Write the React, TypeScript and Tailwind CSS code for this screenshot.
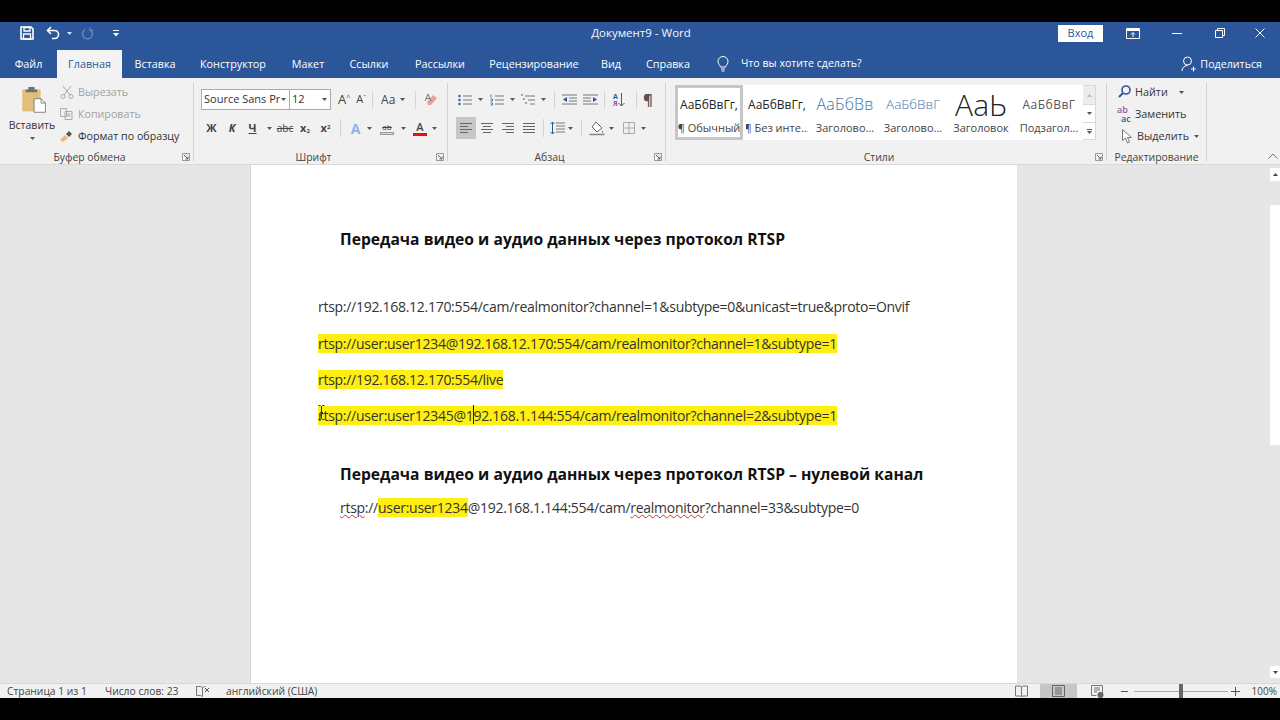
import React from "react";

const Caret = ({ c = "#555" }: { c?: string }) => (
  <svg width="5" height="3" viewBox="0 0 5 3" className="shrink-0"><path d="M0 0h5L2.5 3z" fill={c} /></svg>
);

const Launcher = () => (
  <svg width="8" height="8" viewBox="0 0 8 8" className="shrink-0"><path d="M.5 7.5v-7h7v7z" fill="none" stroke="#999" /><path d="M2 2l4 4M6 3.5V6H3.5" fill="none" stroke="#666" /></svg>
);

const Sep = ({ h = "h-[18px]" }: { h?: string }) => <div className={`w-px ${h} bg-[#d4d4d4] shrink-0`} />;

const Lines = ({ rows, w = 12 }: { rows: [number, number, number][]; w?: number }) => (
  <svg width={w} height="12" viewBox={`0 0 ${w} 12`} className="shrink-0">
    {rows.map(([x, y, l], i) => <rect key={i} x={x} y={y} width={l} height="1" fill="#666" />)}
  </svg>
);

const Group = ({ w, label, launcher, children }: { w: string; label: string; launcher?: boolean; children: React.ReactNode }) => (
  <div className={`${w} shrink-0 flex flex-col border-r border-[#d2d2d2] mt-[5px] h-[78px]`}>
    <div className="flex-1 min-h-0 -mt-[3px]">{children}</div>
    <div className="h-[8px] flex items-center">
      <div className={`flex-1 text-center text-[10.4px] leading-[8px] text-[#444] whitespace-nowrap ${launcher ? "pr-[3px]" : ""}`}>{label}</div>
      {launcher && <div className="pr-[3px] flex"><Launcher /></div>}
    </div>
  </div>
);

const Style = ({ w, sample, label, cls, active }: { w: string; sample: string; label: string; cls: string; active?: boolean }) => (
  <div className={`${w} shrink-0 h-full flex flex-col items-center overflow-hidden ${active ? "border-[3px] border-[#c6c6c6]" : "border-[3px] border-transparent"}`}>
    <div className={`h-[33px] leading-[33px] flex items-center whitespace-nowrap ${cls}`}>{sample}</div>
    <div className="text-[11px] leading-[13px] text-[#444] whitespace-nowrap">{label}</div>
  </div>
);

const Tab = ({ t, active, w }: { t: string; active?: boolean; w: string }) => (
  <div className={`${w} shrink-0 h-[28px] flex items-center justify-center text-[10.8px] ${active ? "bg-[#f3f3f3] text-[#2b579a]" : "text-white"}`}>{t}</div>
);

const DocLine = ({ children, cls }: { children: React.ReactNode; cls: string }) => (
  <div className={`text-[14px] leading-[20px] text-[#333] whitespace-nowrap tracking-[-0.28px] ${cls}`}>{children}</div>
);

const Mark = ({ children }: { children: React.ReactNode }) => <span className="bg-[#ffee11]">{children}</span>;

export default function App() {
  return (
    <div className="w-[1280px] h-[720px] bg-black flex flex-col overflow-hidden font-['Open_Sans','Noto_Sans',sans-serif]">
      <div className="h-[22px] shrink-0" />
      {/* Title bar */}
      <div className="h-[28px] shrink-0 bg-[#2b579a] flex items-center text-white pb-[6px]">
        <div className="flex items-center pl-[20px] w-[140px] gap-[5px]">
          <svg width="14" height="14" viewBox="0 0 14 14" className="shrink-0"><path d="M1 1h10l2 2v10H1z" fill="none" stroke="#fff" strokeWidth="1.6" /><path d="M4 1.5h6V5H4zM3.5 8h7v5h-7z" fill="none" stroke="#fff" strokeWidth="1.3" /></svg>
          <svg width="16" height="14" viewBox="0 0 16 14" className="ml-[7px] shrink-0"><path d="M5 1L1.5 4.5 5 8" fill="none" stroke="#fff" strokeWidth="1.6" /><path d="M2 4.5h6.5a4 4 0 0 1 0 8H6" fill="none" stroke="#fff" strokeWidth="1.6" /></svg>
          <Caret c="#dce6f5" />
          <svg width="13" height="13" viewBox="0 0 13 13" className="ml-[4px] shrink-0"><path d="M9 2.5a5 5 0 1 1-5 0M9 .5v3h3" fill="none" stroke="#6b8cc0" strokeWidth="1.3" /></svg>
          <svg width="6" height="7" viewBox="0 0 6 7" className="ml-[14px] shrink-0"><path d="M0 0h6v1H0zM0 3h6L3 6.500z" fill="#fff" /></svg>
        </div>
        <div className="flex-1 text-center text-[11.5px] pl-[84px] text-[#f4f7fc]">Документ9  -  Word</div>
        <div className="w-[45px] h-[17px] bg-white text-[#2b579a] text-[11px] flex items-center justify-center shrink-0">Вход</div>
        <div className="w-[45px] flex justify-center ml-[7px]">
          <svg width="14" height="11" viewBox="0 0 14 11"><path d="M.5.500h13v10H.500z" fill="none" stroke="#fff" /><path d="M1 1h12v2H1z" fill="#fff" /><path d="M7 9V5M5 6.500L7 4.500l2 2" fill="none" stroke="#fff" /></svg>
        </div>
        <div className="w-[43px] flex justify-center"><div className="w-[10px] h-px bg-white" /></div>
        <div className="w-[44px] flex justify-center">
          <svg width="10" height="10" viewBox="0 0 10 10"><path d="M.5 2.500h7v7h-7zM2.500 2.500v-2h7v7h-2" fill="none" stroke="#fff" /></svg>
        </div>
        <div className="w-[38px] flex justify-center pr-[2px]">
          <svg width="10" height="10" viewBox="0 0 10 10"><path d="M.5.500l9 9M9.500.500l-9 9" fill="none" stroke="#fff" /></svg>
        </div>
      </div>
      {/* Tabs */}
      <div className="h-[28px] shrink-0 bg-[#2b579a] flex items-center">
        <Tab t="Файл" w="w-[57px]" />
        <Tab t="Главная" active w="w-[65px]" />
        <Tab t="Вставка" w="w-[66px]" />
        <Tab t="Конструктор" w="w-[90px]" />
        <Tab t="Макет" w="w-[60px]" />
        <Tab t="Ссылки" w="w-[62px]" />
        <Tab t="Рассылки" w="w-[80px]" />
        <Tab t="Рецензирование" w="w-[108px]" />
        <Tab t="Вид" w="w-[46px]" />
        <Tab t="Справка" w="w-[68px]" />
        <div className="flex items-center gap-[12px] ml-[15px] text-white text-[10.6px]">
          <svg width="12" height="16" viewBox="0 0 12 16"><path d="M3.500 11C3 9 1 8 1 5.500a5 5 0 0 1 10 0C11 8 9 9 8.500 11zM4 13h4M4.500 15h3" fill="none" stroke="#fff" /></svg>
          <span>Что вы хотите сделать?</span>
        </div>
        <div className="flex-1" />
        <div className="flex items-center gap-[4px] text-white text-[10.7px] pr-[18px]">
          <svg width="15" height="16" viewBox="0 0 15 16"><circle cx="6.500" cy="5" r="4" fill="none" stroke="#fff" /><path d="M1 15c0-3 2-5.500 5.500-5.500M10 13h5M12.500 10.500v5" fill="none" stroke="#fff" /></svg>
          <span>Поделиться</span>
        </div>
      </div>
      {/* Ribbon */}
      <div className="h-[87px] shrink-0 bg-[#f1f1f1] border-b border-[#d9d9d9] flex text-[#444]">
        <Group w="w-[194px]" label="Буфер обмена" launcher>
          <div className="flex h-full">
            <div className="w-[60px] flex flex-col items-center pt-[6px] pl-[4px] shrink-0">
              <svg width="27" height="28" viewBox="0 0 30 32" className="ml-[4px]">
                <path d="M1 4h21v25H1z" fill="#e3bd7c" />
                <path d="M8 1h7v3h3v3H5V4h3z" fill="#6f6f6f" />
                <path d="M14.500 14.500h8l5 5V30h-13z" fill="#fff" stroke="#777" />
                <path d="M22.500 14.500v5h5" fill="none" stroke="#777" />
              </svg>
              <div className="text-[10.5px] leading-[14px] mt-[4px] text-[#333]">Вставить</div>
              <div className="mt-[5px]"><Caret /></div>
            </div>
            <div className="flex flex-col pt-[1px] text-[10.7px] text-[#a2a2a2] whitespace-nowrap">
              <div className="h-[22px] flex items-center gap-[4px]">
                <svg width="14" height="14" viewBox="0 0 14 14"><path d="M3 1l7 9M11 1L4 10" stroke="#a8a8a8" fill="none" /><circle cx="3" cy="11.500" r="2" fill="none" stroke="#a8a8a8" /><circle cx="11" cy="11.500" r="2" fill="none" stroke="#a8a8a8" /></svg>
                <span>Вырезать</span>
              </div>
              <div className="h-[22px] flex items-center gap-[4px]">
                <svg width="14" height="14" viewBox="0 0 14 14"><path d="M.5 1.500h6v8h-6zM5 4.500h7v8H5z" fill="#f1f1f1" stroke="#aaa" /><path d="M6.500 7h4M6.500 9h4" stroke="#aaa" /></svg>
                <span>Копировать</span>
              </div>
              <div className="h-[22px] flex items-center gap-[4px] text-[#333]">
                <svg width="14" height="14" viewBox="0 0 14 14"><path d="M0 11l5-5 3 3-5 4z" fill="#e3bd7c" /><path d="M6 5l3-3 3 3-3 3z" fill="#555" /></svg>
                <span>Формат по образцу</span>
              </div>
            </div>
          </div>
        </Group>
        <Group w="w-[254px]" label="Шрифт" launcher>
          <div className="pt-[9px] pl-[7px] flex flex-col">
            <div className="flex items-center h-[21px]">
              <div className="w-[89px] h-[21px] bg-white border border-[#ababab] flex items-center justify-between pl-[2px] pr-[3px] text-[11px] text-[#333] whitespace-nowrap">
                <span>Source Sans Pr</span><Caret />
              </div>
              <div className="w-[41px] h-[21px] bg-white border border-l-0 border-[#ababab] flex items-center justify-between pl-[2px] pr-[3px] text-[11px] text-[#333]">
                <span>12</span><Caret />
              </div>
              <div className="flex items-center gap-[9px] ml-[7px] text-[13px] text-[#444]">
                <span>A<sup className="text-[7px] text-[#2b579a]">^</sup></span>
                <span className="text-[11px] -ml-[3px]">A<sup className="text-[7px] text-[#2b579a]">ˇ</sup></span>
              </div>
              <div className="ml-[6px]"><Sep /></div>
              <div className="flex items-center gap-[5px] ml-[8px] text-[12px]">Aa <Caret /></div>
              <div className="ml-[10px]"><Sep /></div>
              <svg width="15" height="15" viewBox="0 0 15 15" className="ml-[8px]"><path d="M3 10l6-7 4 3-6 7H4z" fill="#e9a0a0" /><path d="M1 9l3-7 3 7M2 6.500h4" fill="none" stroke="#777" /></svg>
            </div>
            <div className="flex items-center h-[22px] mt-[7px] text-[#444]">
              <span className="text-[11px] font-bold w-[21px] text-center">Ж</span>
              <span className="text-[11px] font-bold italic w-[20px] text-center">К</span>
              <span className="text-[11px] font-bold underline w-[21px] text-center">Ч</span>
              <div className="w-[12px] flex justify-center"><Caret /></div>
              <span className="text-[10px] line-through w-[20px] text-center">abc</span>
              <span className="text-[11px] font-bold w-[20px] text-center">x<sub className="text-[6px]">2</sub></span>
              <span className="text-[11px] font-bold w-[21px] text-center">x<sup className="text-[6px]">2</sup></span>
              <div className="ml-[4px]"><Sep /></div>
              <span className="text-[14px] font-bold text-[#8fb4e8] w-[19px] text-center ml-[5px]">A</span>
              <div className="w-[8px] flex justify-center"><Caret /></div>
              <div className="w-[18px] ml-[5px] flex flex-col items-center">
                <span className="text-[8px] leading-[9px] line-through">ab</span>
                <div className="w-[14px] h-[3px] bg-[#ffee11] border border-[#999] mt-[1px]" />
              </div>
              <div className="w-[14px] flex justify-center"><Caret /></div>
              <div className="w-[16px] ml-[2px] flex flex-col items-center">
                <span className="text-[11px] leading-[11px] font-semibold">A</span>
                <div className="w-[14px] h-[3px] bg-[#e81010] mt-[1px]" />
              </div>
              <div className="w-[12px] flex justify-center"><Caret /></div>
            </div>
          </div>
        </Group>
        <Group w="w-[218px]" label="Абзац" launcher>
          <div className="pt-[9px] pl-[10px] flex flex-col">
            <div className="flex items-center h-[21px]">
              <svg width="14" height="12" viewBox="0 0 14 12" className="shrink-0"><circle cx="1.500" cy="2" r="1.200" fill="#2b579a" /><circle cx="1.500" cy="6" r="1.200" fill="#2b579a" /><circle cx="1.500" cy="10" r="1.200" fill="#2b579a" /><path d="M5 2h9M5 6h9M5 10h9" stroke="#777" /></svg>
              <div className="ml-[6px]"><Caret /></div>
              <svg width="14" height="12" viewBox="0 0 14 12" className="ml-[7px] shrink-0"><path d="M1 .500v3M.500 5h2v2H.500M.500 9h2v2H.500" stroke="#2b579a" fill="none" strokeWidth=".8" /><path d="M5 2h9M5 6h9M5 10h9" stroke="#777" /></svg>
              <div className="ml-[6px]"><Caret /></div>
              <svg width="15" height="12" viewBox="0 0 15 12" className="ml-[6px] shrink-0"><path d="M0 1h2M2 5h2M4 9h2" stroke="#2b579a" fill="none" /><path d="M4 2h10M7 6h7M9 10h5" stroke="#777" /></svg>
              <div className="ml-[5px]"><Caret /></div>
              <div className="ml-[8px]"><Sep /></div>
              <svg width="15" height="12" viewBox="0 0 15 12" className="ml-[7px] shrink-0"><path d="M0 1h15M7 4h8M7 7h8M0 10h15" stroke="#777" /><path d="M1 5.500L5 3v5z" fill="#2b579a" /></svg>
              <svg width="15" height="12" viewBox="0 0 15 12" className="ml-[6px] shrink-0"><path d="M0 1h15M0 4h8M0 7h8M0 10h15" stroke="#777" /><path d="M14 5.500L10 3v5z" fill="#2b579a" /></svg>
              <div className="ml-[6px]"><Sep /></div>
              <div className="ml-[8px] w-[14px] flex items-center">
                <div className="flex flex-col text-[7px] leading-[7px] font-bold"><span className="text-[#2b579a]">А</span><span className="text-[#a24bb0]">Я</span></div>
                <svg width="7" height="14" viewBox="0 0 7 14"><path d="M3.500 0v13M.500 10l3 3 3-3" stroke="#555" fill="none" /></svg>
              </div>
              <div className="ml-[9px]"><Sep /></div>
              <span className="ml-[6px] text-[15px] font-bold text-[#555]">¶</span>
            </div>
            <div className="flex items-center h-[22px] mt-[7px] -ml-[2px]">
              <div className="w-[20px] h-[22px] bg-[#c6c6c6] flex items-center justify-center"><Lines rows={[[0, 1, 12], [0, 4, 8], [0, 7, 12], [0, 10, 8]]} /></div>
              <div className="w-[21px] flex justify-center"><Lines rows={[[0, 1, 12], [2, 4, 8], [0, 7, 12], [2, 10, 8]]} /></div>
              <div className="w-[21px] flex justify-center"><Lines rows={[[0, 1, 12], [4, 4, 8], [0, 7, 12], [4, 10, 8]]} /></div>
              <div className="w-[21px] flex justify-center"><Lines rows={[[0, 1, 12], [0, 4, 12], [0, 7, 12], [0, 10, 12]]} /></div>
              <div className="ml-[4px]"><Sep /></div>
              <svg width="15" height="14" viewBox="0 0 15 14" className="ml-[6px] shrink-0"><path d="M6 2h9M6 5h9M6 8h9M6 11h9" stroke="#777" /><path d="M2.500 1v12M.500 3l2-2 2 2M.500 11l2 2 2-2" stroke="#2b579a" fill="none" /></svg>
              <div className="ml-[3px]"><Caret /></div>
              <div className="ml-[8px]"><Sep /></div>
              <svg width="17" height="15" viewBox="0 0 17 15" className="ml-[7px] shrink-0"><path d="M7 1l6 6-5 4-5-5z" fill="#fff" stroke="#666" /><path d="M13 9l1.500 2.500L13 12z" fill="#5a8fd8" /><path d="M.500 13.500h15" stroke="#888" strokeWidth="1.500" /></svg>
              <div className="ml-[3px]"><Caret /></div>
              <svg width="12" height="12" viewBox="0 0 12 12" className="ml-[9px] shrink-0"><path d="M.500.500h11v11H.500zM6 .500v11M.500 6h11" fill="none" stroke="#aaa" /></svg>
              <div className="ml-[6px]"><Caret /></div>
            </div>
          </div>
        </Group>
        <Group w="w-[441px]" label="Стили" launcher>
          <div className="pt-[5px] pl-[9px] flex">
            <div className="h-[55px] w-[408px] bg-white flex overflow-hidden">
              <Style active w="w-[68px]" sample="АаБбВвГг," label="¶ Обычный" cls="text-[12px] text-[#222]" />
              <Style w="w-[68px]" sample="АаБбВвГг," label="¶ Без инте..." cls="text-[12px] text-[#222]" />
              <Style w="w-[68px]" sample="АаБбВв" label="Заголово..." cls="text-[16px] font-light text-[#3f74ad] tracking-[0.2px]" />
              <Style w="w-[68px]" sample="АаБбВвГ" label="Заголово..." cls="text-[13.5px] font-light text-[#3f74ad]" />
              <Style w="w-[68px]" sample="АаЬ" label="Заголовок" cls="text-[30px] text-[#222] font-light" />
              <Style w="w-[68px]" sample="АаБбВвГ" label="Подзагол..." cls="text-[12px] text-[#555] tracking-[0.5px]" />
            </div>
            <div className="w-[13px] h-[55px] flex flex-col border border-[#d8d8d8] border-l-0 shrink-0">
              <div className="h-[19px] bg-[#ececec] flex justify-center items-center border-b border-[#d8d8d8]"><div className="rotate-180"><Caret c="#bbb" /></div></div>
              <div className="h-[18px] bg-white flex justify-center items-center border-b border-[#d8d8d8]"><Caret /></div>
              <div className="flex-1 bg-white flex flex-col justify-center items-center gap-[1px]"><div className="w-[5px] h-px bg-[#555]" /><Caret /></div>
            </div>
          </div>
        </Group>
        <Group w="w-[100px]" label="Редактирование">
          <div className="pl-[11px] pt-[1px] flex flex-col text-[10.8px] text-[#333] whitespace-nowrap">
            <div className="h-[22px] flex items-center gap-[4px]">
              <svg width="13" height="14" viewBox="0 0 13 14" className="shrink-0"><circle cx="8" cy="5" r="4" fill="none" stroke="#2b579a" strokeWidth="1.600" /><path d="M5 8l-4 4" stroke="#2b579a" strokeWidth="2" /></svg>
              <span>Найти</span>
              <div className="ml-[7px]"><Caret /></div>
            </div>
            <div className="h-[22px] flex items-center gap-[1px] -ml-[1px]">
              <div className="flex flex-col text-[9px] leading-[9px] font-semibold w-[17px]"><span className="text-[#9257a8]">ab</span><span className="text-[#2b579a] pl-[4px]">ac</span></div>
              <span>Заменить</span>
            </div>
            <div className="h-[22px] flex items-center gap-[5px] pl-[4px]">
              <svg width="10" height="15" viewBox="0 0 10 15" className="shrink-0"><path d="M.500.500v11l3-2.500 2 5 2-1-2-4.500h4z" fill="#fff" stroke="#777" /></svg>
              <span>Выделить</span>
              <Caret />
            </div>
          </div>
        </Group>
        <div className="flex-1 flex items-end justify-end pb-[5px] pr-[2px]">
          <svg width="10" height="6" viewBox="0 0 10 6"><path d="M.500 5.500L5 1l4.500 4.500" fill="none" stroke="#777" /></svg>
        </div>
      </div>
      {/* Document area */}
      <div className="flex-1 min-h-0 bg-[#e6e6e6] flex justify-start">
        <div className="w-[250px] shrink-0" />
        <div className="w-[767px] shrink-0 bg-white flex flex-col border-l border-[#d4d4d4]">
          <div className="pl-[89px] pt-[63px]">
            <div className="text-[15.65px] leading-[22px] font-bold text-[#111] whitespace-nowrap">Передача видео и аудио данных через протокол RTSP</div>
          </div>
          <div className="pl-[67px] pt-[47px] flex flex-col gap-[16px]">
            <DocLine cls="">rtsp://192.168.12.170:554/cam/realmonitor?channel=1&amp;subtype=0&amp;unicast=true&amp;proto=Onvif</DocLine>
            <DocLine cls="mt-[1px]"><Mark>rtsp://user:user1234@192.168.12.170:554/cam/realmonitor?channel=1&amp;subtype=1</Mark></DocLine>
            <DocLine cls=""><Mark>rtsp://192.168.12.170:554/live</Mark></DocLine>
            <DocLine cls="relative">
              <Mark>rtsp://user:user12345@1</Mark>
              <span className="relative"><span className="absolute left-0 -top-[1px] w-px h-[19px] bg-[#222] z-10" /></span>
              <Mark>92.168.1.144:554/cam/realmonitor?channel=2&amp;subtype=1</Mark>
              <svg width="7" height="15" viewBox="0 0 7 15" className="absolute left-0 -top-[1px]"><path d="M.5.500h2l1 1 1-1h2M3.500 1.500v12M.5 14.500h2l1-1 1 1h2M2 7.500h3" fill="none" stroke="#333" /></svg>
            </DocLine>
          </div>
          <div className="pl-[89px] pt-[37px]">
            <div className="text-[15.65px] leading-[22px] font-bold text-[#111] whitespace-nowrap">Передача видео и аудио данных через протокол RTSP – нулевой канал</div>
          </div>
          <div className="pl-[89px] pt-[13px]">
            <DocLine cls="">
              <span className="underline decoration-wavy decoration-[#d03030] decoration-1">rtsp</span>://<Mark>user:user1234</Mark>@192.168.1.144:554/cam/<span className="underline decoration-wavy decoration-[#d03030] decoration-1">realmonitor</span>?channel=33&amp;subtype=0
            </DocLine>
          </div>
        </div>
        <div className="flex-1" />
        <div className="w-[10px] shrink-0 bg-[#e6e6e6] flex flex-col pt-[3px] pb-[5px]">
          <div className="h-[13px] bg-white flex items-center justify-center"><div className="rotate-180"><Caret c="#444" /></div></div>
          <div className="h-[24px]" />
          <div className="h-[240px] bg-white" />
          <div className="flex-1" />
          <div className="h-[12px] bg-white flex items-center justify-center"><Caret c="#444" /></div>
        </div>
      </div>
      {/* Status bar */}
      <div className="h-[15px] shrink-0 bg-[#f1f1f1] border-t border-[#d8d8d8] flex items-center text-[10.3px] leading-[14px] text-[#444] whitespace-nowrap">
        <span className="ml-[7px] w-[98px]">Страница 1 из 1</span>
        <span className="w-[91px]">Число слов: 23</span>
        <svg width="14" height="13" viewBox="0 0 14 13" className="shrink-0"><path d="M.500 1.500h4l2 1v9l-2-1h-4zM6.500 2.500l2-1h1" fill="none" stroke="#777" /><path d="M9 3l4 4M13 3l-4 4" stroke="#555" /></svg>
        <span className="ml-[16px]">английский (США)</span>
        <div className="flex-1" />
        <svg width="13" height="12" viewBox="0 0 13 12" className="shrink-0"><path d="M.500 1h5l1 1 1-1h5v10h-5l-1 1-1-1h-5zM6.500 2v9" fill="none" stroke="#777" /></svg>
        <div className="w-[37px] h-[14px] bg-[#c6c6c6] ml-[12px] flex items-center justify-center shrink-0">
          <svg width="13" height="12" viewBox="0 0 13 12"><path d="M.500.500h12v11H.500zM3 3h7M3 5h7M3 7h7M3 9h7" fill="none" stroke="#666" /></svg>
        </div>
        <svg width="13" height="13" viewBox="0 0 13 13" className="ml-[14px] shrink-0"><path d="M.500.500h11v8H7M.500.500v10h5M3 3h6M3 5h6M3 7h3" fill="none" stroke="#777" /><circle cx="9.500" cy="10" r="3" fill="#666" /></svg>
        <div className="w-[7px] h-px bg-[#555] ml-[17px] shrink-0" />
        <div className="w-[94px] h-[14px] ml-[6px] flex items-center shrink-0">
          <div className="w-[45px] h-px bg-[#aaa]" />
          <div className="w-[4px] h-[14px] bg-[#666]" />
          <div className="w-[45px] h-px bg-[#aaa]" />
        </div>
        <svg width="9" height="9" viewBox="0 0 9 9" className="ml-[3px] shrink-0"><path d="M0 4.500h9M4.500 0v9" stroke="#555" /></svg>
        <span className="ml-[12px] mr-[3px] text-[10px]">100%</span>
      </div>
      <div className="h-[22px] shrink-0" />
    </div>
  );
}
